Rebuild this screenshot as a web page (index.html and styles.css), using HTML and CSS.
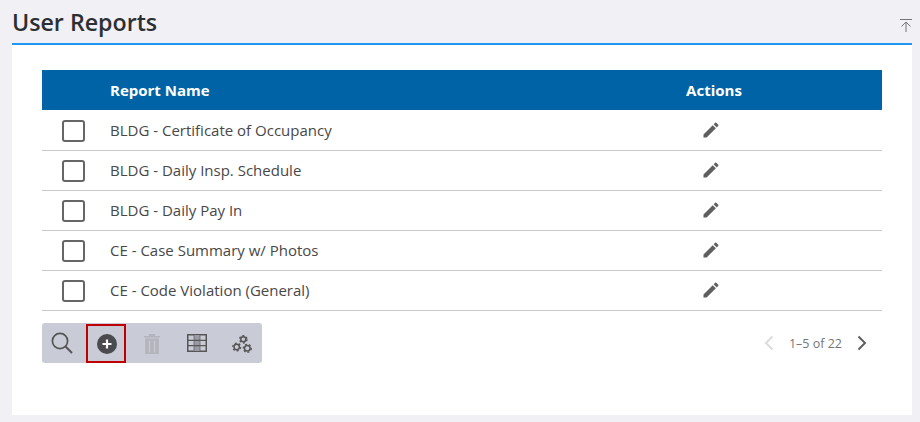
FILE: index.html
```html
<!DOCTYPE html>
<html lang="en">
<head>
<meta charset="utf-8">
<title>User Reports</title>
<link rel="stylesheet" href="styles.css">
</head>
<body>
<main class="panel">
  <header class="panel-head">
    <h1 class="title">User Reports</h1>
    <button class="collapse" aria-label="Collapse">
      <svg width="12" height="13" viewBox="0 0 12 13"><path d="M0 .5h12M6 13V3M1.500 7.500L6 3l4.500 4.500" fill="none" stroke="#757575" stroke-width="1"/></svg>
    </button>
  </header>
  <section class="panel-body">
    <div class="table">
      <div class="row head"><span class="check-cell"></span><span class="name">Report Name</span><span class="actions">Actions</span></div>
      <div class="row"><span class="check-cell"><i class="check"></i></span><span class="name">BLDG - Certificate of Occupancy</span><span class="actions"><svg class="pencil" viewBox="0 0 24 24"><path d="M3 17.250V21h3.750L17.810 9.940l-3.750-3.750L3 17.250zM20.710 7.040a1 1 0 0 0 0-1.410l-2.340-2.340a1 1 0 0 0-1.410 0l-1.830 1.830 3.750 3.750 1.830-1.830z"/></svg></span></div>
      <div class="row"><span class="check-cell"><i class="check"></i></span><span class="name">BLDG - Daily Insp. Schedule</span><span class="actions"><svg class="pencil" viewBox="0 0 24 24"><path d="M3 17.250V21h3.750L17.810 9.940l-3.750-3.750L3 17.250zM20.710 7.040a1 1 0 0 0 0-1.410l-2.340-2.340a1 1 0 0 0-1.410 0l-1.830 1.830 3.750 3.750 1.830-1.830z"/></svg></span></div>
      <div class="row"><span class="check-cell"><i class="check"></i></span><span class="name">BLDG - Daily Pay In</span><span class="actions"><svg class="pencil" viewBox="0 0 24 24"><path d="M3 17.250V21h3.750L17.810 9.940l-3.750-3.750L3 17.250zM20.710 7.040a1 1 0 0 0 0-1.410l-2.340-2.340a1 1 0 0 0-1.410 0l-1.830 1.830 3.750 3.750 1.830-1.830z"/></svg></span></div>
      <div class="row"><span class="check-cell"><i class="check"></i></span><span class="name">CE - Case Summary w/ Photos</span><span class="actions"><svg class="pencil" viewBox="0 0 24 24"><path d="M3 17.250V21h3.750L17.810 9.940l-3.750-3.750L3 17.250zM20.710 7.040a1 1 0 0 0 0-1.410l-2.340-2.340a1 1 0 0 0-1.410 0l-1.830 1.830 3.750 3.750 1.830-1.830z"/></svg></span></div>
      <div class="row"><span class="check-cell"><i class="check"></i></span><span class="name">CE - Code Violation (General)</span><span class="actions"><svg class="pencil" viewBox="0 0 24 24"><path d="M3 17.250V21h3.750L17.810 9.940l-3.750-3.750L3 17.250zM20.710 7.040a1 1 0 0 0 0-1.410l-2.340-2.340a1 1 0 0 0-1.410 0l-1.830 1.830 3.750 3.750 1.830-1.830z"/></svg></span></div>
    </div>
    <div class="footer">
      <div class="toolbar">
        <span class="tool tool-search">
          <svg width="24" height="24" viewBox="0 0 24 24"><circle cx="10" cy="10" r="7.600" fill="none" stroke="#555" stroke-width="1.700"/><path d="M15.500 15.500L22 22" stroke="#555" stroke-width="2" fill="none"/></svg>
        </span>
        <span class="tool tool-add">
          <svg width="20" height="20" viewBox="0 0 20 20"><circle cx="10" cy="10" r="10" fill="#4a4a4f"/><path d="M10 5.500v9M5.500 10h9" stroke="#fff" stroke-width="2.200"/></svg>
        </span>
        <span class="tool tool-trash">
          <svg width="16" height="20" viewBox="0 0 16 20"><path d="M0 2h16v1.600H0zM5 0h6v2H5zM1.200 4.500h13.600V20H1.200z" fill="#b3b4bc"/><path d="M5.500 6.500v12M10.500 6.500v12" stroke="#c8cad3" stroke-width="1.400"/></svg>
        </span>
        <span class="tool tool-grid">
          <svg width="20" height="18" viewBox="0 0 20 18"><rect x=".75" y=".75" width="18.500" height="16.500" fill="none" stroke="#555" stroke-width="1.500"/><rect x="7" y="1" width="6" height="16" fill="#9a9ba3"/><path d="M1 6.300h18M1 11.700h18" stroke="#555" stroke-width="1.300"/><path d="M7 1v16M13 1v16" stroke="#666" stroke-width=".8"/></svg>
        </span>
        <span class="tool tool-gears">
          <svg width="20" height="18" viewBox="0 0 20 18" fill="none" stroke="#555"><g stroke-width="1.500"><circle cx="11.300" cy="4.300" r="2.500"/><circle cx="4.700" cy="12" r="2.700"/><circle cx="15.300" cy="13.300" r="2.800"/></g><g stroke-width="1.300" stroke-dasharray="2 2"><circle cx="11.300" cy="4.300" r="3.700"/><circle cx="4.700" cy="12" r="3.900"/><circle cx="15.300" cy="13.300" r="4"/></g></svg>
        </span>
      </div>
      <div class="pager">
        <svg class="chev" width="10" height="16" viewBox="0 0 10 16"><path d="M8.500 1.500L2 8l6.500 6.500" fill="none" stroke="#dcdcdc" stroke-width="2"/></svg>
        <span class="count">1–5 of 22</span>
        <svg class="chev" width="10" height="16" viewBox="0 0 10 16"><path d="M1.500 1.500L8 8l-6.500 6.500" fill="none" stroke="#5f5f5f" stroke-width="2"/></svg>
      </div>
    </div>
  </section>
</main>
</body>
</html>
```

FILE: styles.css
```css
* { box-sizing: border-box; }
html, body { height: 100%; }
body {
  margin: 0;
  background: #f1f0f5;
  font-family: "Open Sans", sans-serif;
  color: #444;
  overflow: hidden;
}
.panel { margin: 0 8px 0 12px; }
.panel-head {
  height: 45px;
  display: flex;
  align-items: flex-start;
  justify-content: space-between;
  border-bottom: 2px solid #2196f3;
}
.title {
  margin: 6px 0 0;
  font-size: 23.2px;
  line-height: 32px;
  font-weight: 600;
  color: #2b2f33;
}
.collapse {
  margin: 19px 0 0;
  padding: 0;
  border: 0;
  width: 12px;
  height: 13px;
  background: none;
  display: block;
}
.collapse svg { display: block; }
.panel-body {
  height: 370px;
  background: #fff;
  padding: 25px 30px 0;
}
.row {
  height: 40px;
  display: flex;
  align-items: center;
  border-bottom: 1px solid #c8c8c8;
  font-size: 15px;
  color: #484848;
}
.row.head {
  background: #0063a5;
  border-bottom: 0;
  color: #fff;
  font-weight: 700;
  margin-bottom: 1px;
}
.row:not(.head) .name { margin-bottom: 2px; }
.check-cell { width: 68px; display: flex; padding-left: 20px; }
.check {
  width: 23px;
  height: 22px;
  border: 2px solid #666;
  border-radius: 3px;
  background: #fff;
}
.name { width: 576px; }
.actions { width: 56px; display: flex; justify-content: center; white-space: nowrap; }
.pencil { width: 20px; height: 20px; fill: #5f5f5f; display: block; margin: 0 7px 2px 0; }
.footer {
  margin-top: 12px;
  display: flex;
  align-items: center;
  justify-content: space-between;
}
.toolbar {
  width: 220px;
  height: 40px;
  display: flex;
  background: #c9ccd6;
  border-radius: 3px;
}
.tool {
  display: flex;
  align-items: center;
  justify-content: center;
}
.tool-search { width: 40px; }
.tool-add {
  width: 40px;
  margin: 1px 0 0 4px;
  padding-left: 2px;
  border: 2px solid #c00000;
}
.tool-trash { width: 52px; padding-top: 2px; }
.tool-grid { width: 38px; }
.tool-gears { width: 46px; padding-left: 6px; padding-top: 2px; }
.pager {
  display: flex;
  align-items: center;
  margin-right: 15px;
}
.count {
  margin: 0 15px;
  font-size: 12.5px;
  color: #757575;
}
.chev { display: block; }
```
